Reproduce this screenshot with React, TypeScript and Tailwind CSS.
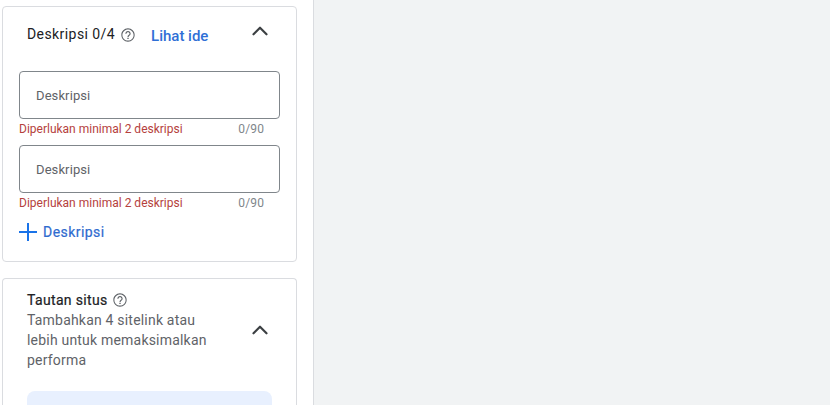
import { ChevronUp } from "lucide-react";

function HelpIcon() {
  return (
    <svg width="16" height="16" viewBox="0 0 24 24" fill="#5f6368" className="shrink-0">
      <path d="M12 2C6.48 2 2 6.48 2 12s4.48 10 10 10 10-4.48 10-10S17.52 2 12 2zm0 18.4c-4.63 0-8.4-3.77-8.4-8.4S7.37 3.6 12 3.6s8.4 3.77 8.4 8.4-3.77 8.4-8.4 8.4z" />
      <path d="M11 16h2v2h-2zm1-10c-2.21 0-4 1.79-4 4h1.7c0-1.27 1.03-2.3 2.3-2.3s2.3 1.03 2.3 2.3c0 2-3.1 1.75-3.1 5h1.7c0-2.25 3.1-2.5 3.1-5 0-2.21-1.79-4-4-4z" />
    </svg>
  );
}

function DescriptionField() {
  return (
    <div>
      <div className="h-[48px] w-[261px] rounded-[4px] border border-[#80868b] bg-white pl-[16px] text-[13px] leading-[47px] tracking-[0.1px] text-[#5f6368]">
        Deskripsi
      </div>
      <div className="flex h-[20px] w-[245px] items-center justify-between text-[12px]">
        <span className="text-[#b5413d]">Diperlukan minimal 2 deskripsi</span>
        <span className="tracking-[0.12px] text-[#80868b]">0/90</span>
      </div>
    </div>
  );
}

export default function App() {
  return (
    <div className="flex h-[405px] w-[830px] overflow-hidden bg-white font-['Roboto',sans-serif]">
      <div className="flex w-[314px] shrink-0 flex-col gap-[16px] border-r border-[#dadce0] pl-[2px] pt-[6px]">
        <section className="h-[256px] w-[295px] shrink-0 rounded-[4px] border border-[#dadce0] bg-white pl-[16px]">
          <div className="mb-[8px] flex h-[56px] items-center pl-[8px]">
            <span className="-mt-[2px] text-[14px] leading-[20px] tracking-[0.42px] text-[#202124]">Deskripsi 0/4</span>
            <span className="ml-[5px]">
              <HelpIcon />
            </span>
            <button type="button" className="ml-[15px] mt-[2px] text-[15px] font-medium text-[#2f6fd6]">
              Lihat ide
            </button>
            <ChevronUp className="-mt-[9px] ml-[39px] text-[#3c4043]" size={26} strokeWidth={2} />
          </div>
          <div className="flex flex-col gap-[6px]">
            <DescriptionField />
            <DescriptionField />
          </div>
          <button type="button" className="mt-[9px] flex items-center gap-[6px] text-[14px] tracking-[0.45px] text-[#2f6bcf] [-webkit-text-stroke:0.2px_#2f6bcf]">
            <svg width="18" height="18" viewBox="0 0 18 18" fill="#1a73e8" className="-mt-[1px]">
              <path d="M8 0h2v8h8v2h-8v8H8v-8H0V8h8z" />
            </svg>
            Deskripsi
          </button>
        </section>
        <section className="w-[295px] grow rounded-t-[4px] border border-b-0 border-[#dadce0] bg-white pl-[24px] pr-[24px] pt-[11px]">
          <div className="flex items-center justify-between">
            <div className="w-[200px]">
              <div className="flex items-center gap-[4px]">
                <span className="text-[14px] leading-[20px] tracking-[0.35px] text-[#202124] [-webkit-text-stroke:0.2px_#202124]">Tautan situs</span>
                <HelpIcon />
              </div>
              <p className="text-[14px] leading-[20px] tracking-[0.2px] text-[#5f6368]">
                Tambahkan 4 sitelink atau lebih untuk memaksimalkan performa
              </p>
            </div>
            <ChevronUp className="mr-[-1px] text-[#3c4043]" size={26} strokeWidth={2} />
          </div>
          <div className="mt-[21px] h-[40px] rounded-t-[8px] bg-[#e8f0fe]" />
        </section>
      </div>
      <div className="grow bg-[#f1f3f4]" />
    </div>
  );
}
